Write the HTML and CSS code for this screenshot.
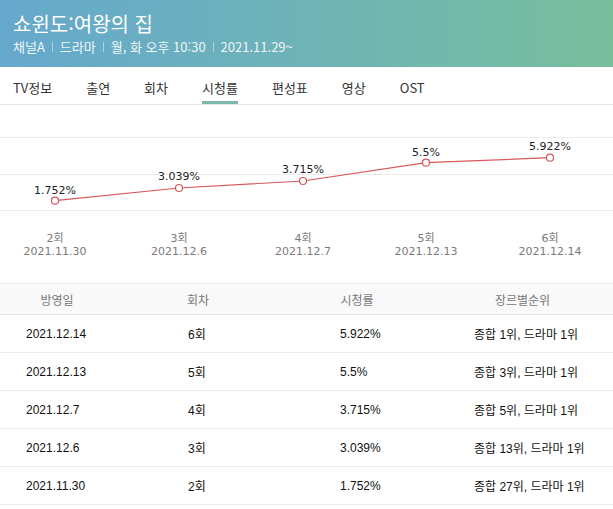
FILE: index.html
```html
<!DOCTYPE html>
<html lang="ko">

<head>
    <meta charset="UTF-8">
    <link rel="stylesheet" href="styles.css">
    <title>쇼윈도:여왕의 집 - 시청률</title>
</head>

<body>
    <section class="page">
        <div class="header">
            <div class="title">쇼윈도:여왕의 집</div>
            <div class="info">
                <span>채널A</span><i class="sep"></i>
                <span>드라마</span><i class="sep"></i>
                <span>월, 화 오후 10:30</span><i class="sep"></i>
                <span>2021.11.29~</span>
            </div>
        </div>

        <div class="tabs">
            <div class="tab">TV정보</div>
            <div class="tab">출연</div>
            <div class="tab">회차</div>
            <div class="tab active">시청률</div>
            <div class="tab">편성표</div>
            <div class="tab">영상</div>
            <div class="tab">OST</div>
        </div>

        <!-- rating chart -->
        <svg class="chart" width="613" height="178" viewBox="0 0 613 178">
            <line class="grid" x1="0" y1="32.5" x2="613" y2="32.5" />
            <line class="grid" x1="0" y1="69.5" x2="613" y2="69.5" />
            <line class="grid" x1="0" y1="105.5" x2="613" y2="105.5" />

            <polyline class="line" points="55,95.7 179,83 303,76 426,57.7 550,52.7" />
            <circle class="dot" cx="55" cy="95.7" r="3.5" />
            <circle class="dot" cx="179" cy="83" r="3.5" />
            <circle class="dot" cx="303" cy="76" r="3.5" />
            <circle class="dot" cx="426" cy="57.7" r="3.5" />
            <circle class="dot" cx="550" cy="52.7" r="3.5" />

            <text class="value" x="55" y="89">1.752%</text>
            <text class="value" x="179" y="75">3.039%</text>
            <text class="value" x="303" y="68">3.715%</text>
            <text class="value" x="426" y="51">5.5%</text>
            <text class="value" x="550" y="45">5.922%</text>

            <text class="axis" x="55" y="137">2회</text>
            <text class="axis" x="55" y="150">2021.11.30</text>
            <text class="axis" x="179" y="137">3회</text>
            <text class="axis" x="179" y="150">2021.12.6</text>
            <text class="axis" x="303" y="137">4회</text>
            <text class="axis" x="303" y="150">2021.12.7</text>
            <text class="axis" x="426" y="137">5회</text>
            <text class="axis" x="426" y="150">2021.12.13</text>
            <text class="axis" x="550" y="137">6회</text>
            <text class="axis" x="550" y="150">2021.12.14</text>
        </svg>

        <div class="table">
            <div class="row head">
                <div>방영일</div>
                <div>회차</div>
                <div>시청률</div>
                <div>장르별순위</div>
            </div>
            <div class="row">
                <div>2021.12.14</div>
                <div>6회</div>
                <div>5.922%</div>
                <div>종합 1위, 드라마 1위</div>
            </div>
            <div class="row">
                <div>2021.12.13</div>
                <div>5회</div>
                <div>5.5%</div>
                <div>종합 3위, 드라마 1위</div>
            </div>
            <div class="row">
                <div>2021.12.7</div>
                <div>4회</div>
                <div>3.715%</div>
                <div>종합 5위, 드라마 1위</div>
            </div>
            <div class="row">
                <div>2021.12.6</div>
                <div>3회</div>
                <div>3.039%</div>
                <div>종합 13위, 드라마 1위</div>
            </div>
            <div class="row">
                <div>2021.11.30</div>
                <div>2회</div>
                <div>1.752%</div>
                <div>종합 27위, 드라마 1위</div>
            </div>
        </div>
    </section>
</body>

</html>
```

FILE: styles.css
```css
* {
    box-sizing: border-box;
}

body {
    margin: 0;
    background-color: white;
    font-family: "Noto Sans CJK KR", sans-serif;
}

.page {
    width: 613px;
}

/* header */
.header {
    height: 67px;
    padding: 11px 13px 0;
    background: linear-gradient(90deg, #65a8cd 0%, #6fb3b7 50%, #78be9c 100%);
    color: white;
}

.title {
    font-size: 20px;
    line-height: 26px;
}

.info {
    display: flex;
    align-items: center;
    margin-top: 2px;
    font-size: 13px;
    line-height: 16px;
    color: #eef6f6;
}

.sep {
    display: inline-block;
    width: 1px;
    height: 10px;
    margin: 0 7px;
    background-color: rgba(255, 255, 255, 0.45);
}

/* tabs */
.tabs {
    display: flex;
    gap: 34px;
    height: 38px;
    padding-left: 13px;
    border-bottom: 1px solid #e6e6e6;
}

.tab {
    height: 37px;
    padding-top: 12px;
    font-size: 13px;
    line-height: 17px;
    color: #333;
}

.tab.active {
    border-bottom: 3px solid #7db8b0;
}

/* chart */
.chart {
    display: block;
}

.grid {
    stroke: #ececec;
    stroke-width: 1;
}

.line {
    fill: none;
    stroke: #d9575b;
    stroke-width: 1.2;
}

.dot {
    fill: white;
    stroke: #d9575b;
    stroke-width: 1.2;
}

.value, .axis {
    font-family: "DejaVu Sans", "Noto Sans CJK KR", sans-serif;
    font-size: 11px;
    text-anchor: middle;
}

.value {
    fill: #222;
}

.axis {
    fill: #7a7a7a;
}

/* table */
.table {
    border-top: 1px solid #ebebeb;
    font-family: "Liberation Sans", "Noto Sans CJK KR", sans-serif;
    font-size: 12px;
}

.row {
    display: grid;
    grid-template-columns: 114px 168px 150px 1fr;
    align-items: center;
    height: 38px;
    border-bottom: 1px solid #ececec;
    color: #111;
}

.row div:nth-child(1) {
    padding-left: 26px;
}

.row div:nth-child(2) {
    padding-left: 74px;
}

.row div:nth-child(3) {
    padding-left: 58px;
}

.row div:nth-child(4) {
    padding-left: 42px;
}

.row.head {
    height: 31px;
    background-color: #f9f9f9;
    border-bottom: 1px solid #e2e2e2;
    color: #777;
    font-family: "Noto Sans CJK KR", sans-serif;
}

.row.head div {
    padding-left: 0;
    text-align: center;
}
```
